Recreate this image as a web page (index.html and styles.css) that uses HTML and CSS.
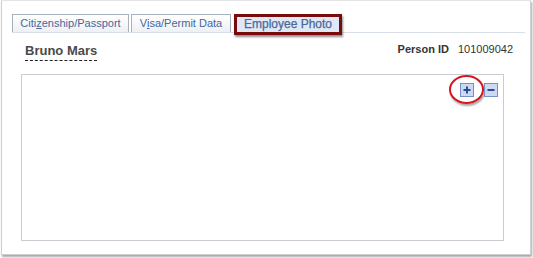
FILE: index.html
```html
<!DOCTYPE html>
<html lang="en">
  <head>
    <meta charset="UTF-8" />
    <title>Employee Photo</title>
    <link rel="stylesheet" href="styles.css">
  </head>
  <body>
    <div class="frame">
      <div class="tabs">
        <a class="tab tab-first" href="javascript:;">Citi<u>z</u>enship/Passport</a>
        <a class="tab tab-second" href="javascript:;">V<u>i</u>sa/Permit Data</a>
        <span class="tab-active"><span class="tab-active-inner">Employee Photo</span></span>
      </div>
      <div class="header">
        <span class="name">Bruno Mars</span>
        <span class="person"><b>Person ID</b><span class="person-id">101009042</span></span>
      </div>
      <div class="photo">
        <div class="tools">
          <a class="tool tool-plus" href="javascript:;">
            <svg width="14" height="14" viewBox="0 0 14 14"><rect x="0.5" y="0.5" width="13" height="13" fill="#cdd8f2" stroke="#7890c8"/><path d="M7 3.5v7M3.5 7h7" stroke="#2a4a9a" stroke-width="2"/></svg>
            <span class="ring"></span>
          </a>
          <a class="tool" href="javascript:;">
            <svg width="14" height="14" viewBox="0 0 14 14"><rect x="0.5" y="0.5" width="13" height="13" fill="#cdd8f2" stroke="#7890c8"/><path d="M3.5 7h7" stroke="#2a4a9a" stroke-width="2"/></svg>
          </a>
        </div>
      </div>
    </div>
  </body>
</html>
```
FILE: styles.css
```css
* {
  margin: 0;
  padding: 0;
  box-sizing: border-box;
}
a {
  text-decoration: none;
}
html,
body {
  width: 100%;
  height: 100%;
  background-color: #fff;
  font-family: 'Liberation Sans', Arial, sans-serif;
}
.frame {
  height: 255px;
  margin: 0 2px 0 1px;
  padding-top: 13px;
  border: 1px solid #cfcfcf;
  border-top-color: #e4e4e4;
  box-shadow: 1px 2px 2px rgba(0, 0, 0, 0.35);
}
.tabs {
  display: flex;
  align-items: flex-start;
  height: 19px;
  margin: 0 5px 0 10px;
  border-bottom: 1px solid #d8dfe8;
}
.tab {
  height: 18px;
  line-height: 16px;
  font-size: 11px;
  color: #44679c;
  text-align: center;
  border: 1px solid #a8b0bc;
  border-bottom: none;
  background: linear-gradient(#ffffff, #eef0f3);
}
.tab-first {
  width: 117px;
  margin-right: 2px;
}
.tab-second {
  width: 100px;
  margin-right: 3px;
}
.tab-active {
  display: block;
  width: 108px;
  height: 21px;
  border: 3px solid #7a0b0b;
  box-shadow: 1px 2px 2px rgba(0, 0, 0, 0.45);
  position: relative;
}
.tab-active-inner {
  display: block;
  height: 15px;
  line-height: 15px;
  background-color: #dfe8f6;
  font-size: 12px;
  color: #4c6898;
  text-align: center;
  -webkit-text-stroke: 0.25px #4c6898;
}
.header {
  display: flex;
  justify-content: space-between;
  align-items: flex-start;
  margin: 9px 17px 0 23px;
}
.name {
  font-size: 13px;
  font-weight: bold;
  color: #4a4a4a;
  line-height: 17px;
  padding-bottom: 1px;
  border-bottom: 1px dashed #222;
}
.person {
  font-size: 11px;
  color: #333;
  line-height: 14px;
}
.person-id {
  margin-left: 9px;
}
.photo {
  width: 483px;
  height: 167px;
  margin: 13px 0 0 19px;
  border: 1px solid #c9cdd3;
}
.tools {
  display: flex;
  justify-content: flex-end;
  gap: 10px;
  padding: 8px 5px 0 0;
}
.tool {
  display: block;
  width: 14px;
  height: 14px;
  position: relative;
}
.tool svg {
  display: block;
}
.ring {
  position: absolute;
  left: -11px;
  top: -8px;
  width: 35px;
  height: 29px;
  border: 2px solid #d8141c;
  border-radius: 50%;
  box-shadow: 1px 2px 2px rgba(0, 0, 0, 0.35);
}
```
